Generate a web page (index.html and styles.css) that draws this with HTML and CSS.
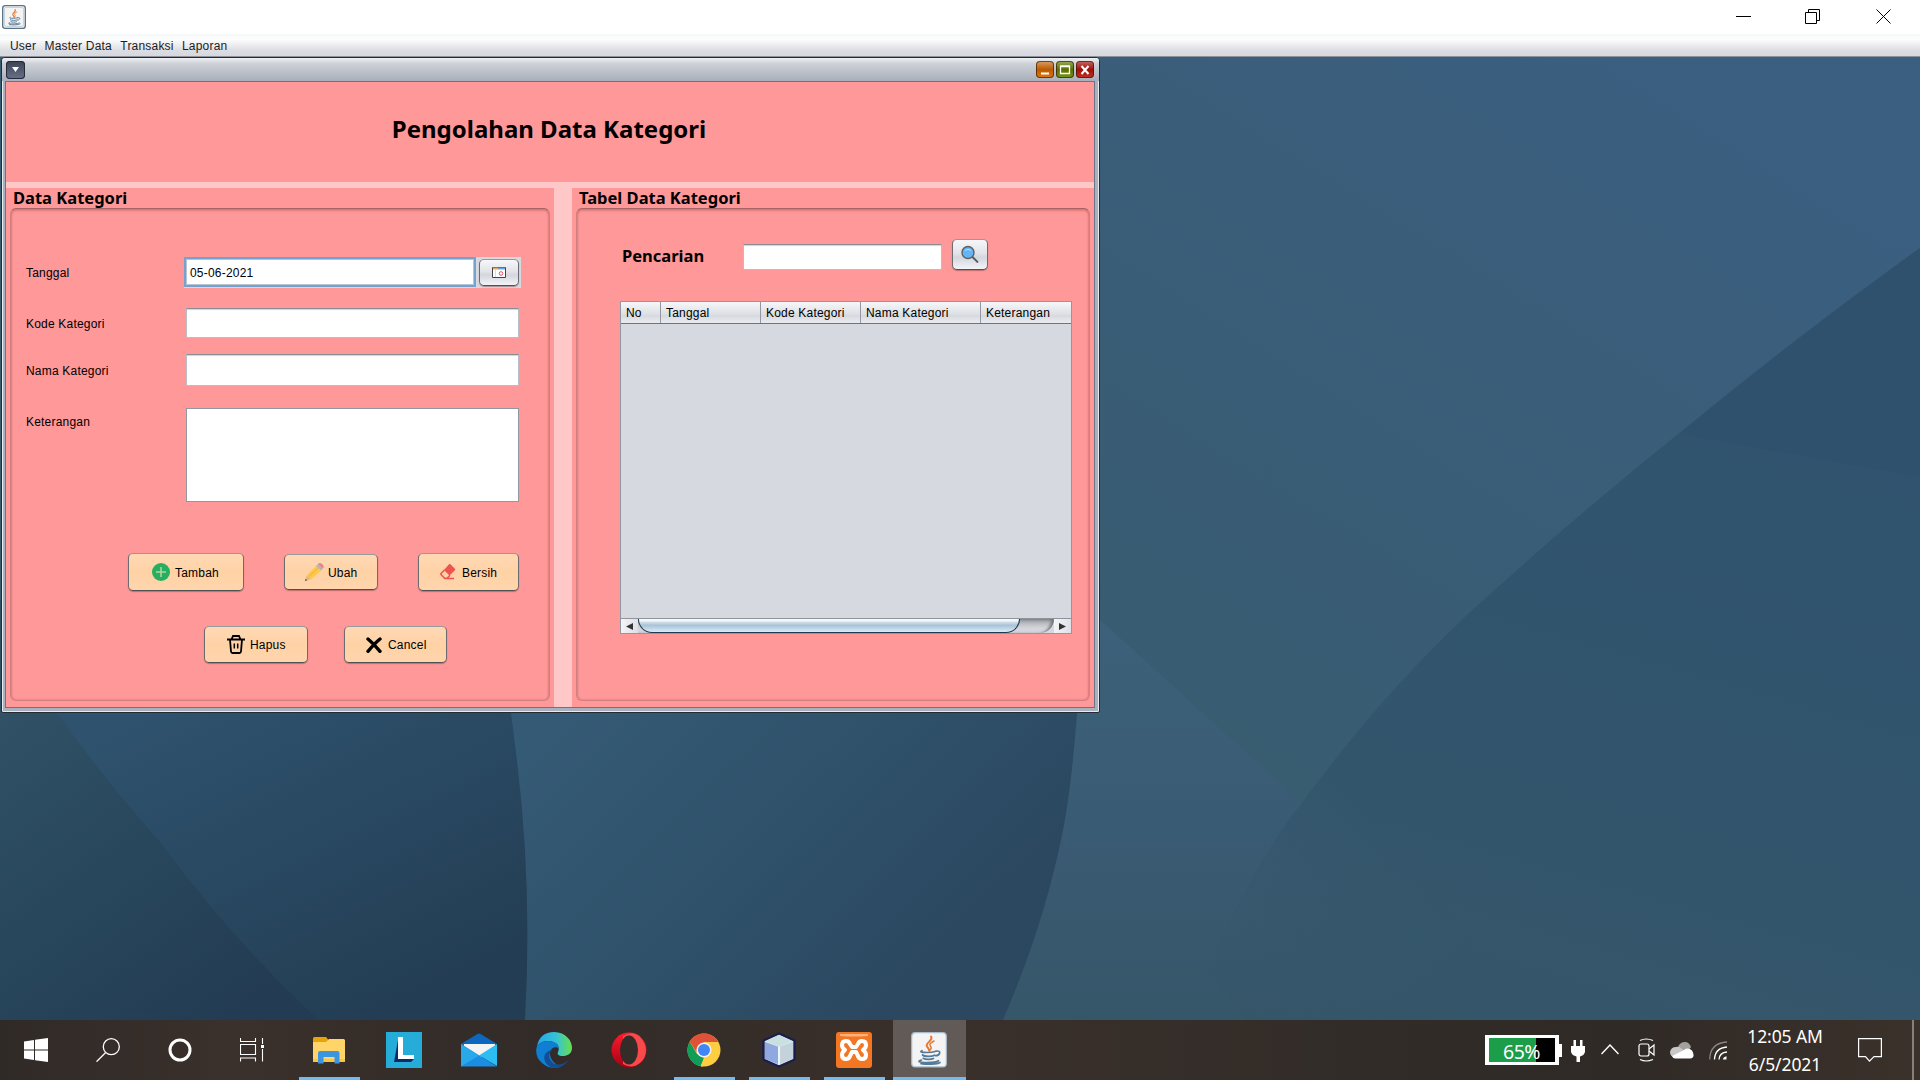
FILE: index.html
```html
<!DOCTYPE html>
<html lang="id">
<head>
<meta charset="utf-8">
<title>Pengolahan Data Kategori</title>
<link rel="stylesheet" href="styles.css">
</head>
<body>
<svg class="defs" aria-hidden="true">
  <symbol id="java" viewBox="0 0 36 36">
    <rect x=".7" y=".7" width="34.6" height="34.2" rx="3.5" fill="#f4f4f4" stroke="#a9bccb" stroke-width="1.2"/>
    <g fill="none" stroke="#e8762c" stroke-linecap="round"><path stroke-width="2" d="M20 4.500c3 4-6.500 6.500-4 10 1 1.500 2.200 2.400 2.300 4.200"/><path stroke-width="1.500" d="M23 9c-6 3-4 4.500-3 6.200.8 1.400-.3 2.200-1.500 3.200"/></g>
    <g fill="none" stroke="#557a98" stroke-width="1.700" stroke-linecap="round"><path d="M11 18.700c-5 2 8 2.500 14 .5M11.500 23c2 1.800 9.500 1.600 12 .2M12.300 26.300c2 1.500 8 1.400 10.200.2M25 19.200c6-1.200 4 4.300-.5 4.500M10.500 28c-10 3 13 3.500 17 .7M10 31.700c7 1 16 .5 19-1.300"/></g>
  </symbol>
</svg>

<header class="titlebar">
  <svg class="app-icon" viewBox="0 0 36 36"><rect x="1" y="1" width="34" height="34" rx="4" fill="#f4f4f4" stroke="#5c7385" stroke-width="2"/><use href="#java" x="3" y="3" width="30" height="30"/></svg>
  <svg class="win-buttons" width="155" height="15" viewBox="0 0 155 15" fill="none" stroke="#000">
    <path d="M0 7.500h15M69.500 3.500h11v11h-11zM72.500 3V.500h11v11H81M140.500.500l14 14M154.500.500l-14 14"/>
  </svg>
</header>
<nav class="menubar"><span>User</span><span>Master Data</span><span>Transaksi</span><span>Laporan</span></nav>

<main class="desktop">
  <svg class="wallpaper" viewBox="0 57 1920 963" preserveAspectRatio="none">
    <defs>
      <linearGradient id="sky" gradientUnits="userSpaceOnUse" x1="1700" y1="57" x2="1240" y2="780"><stop offset="0" stop-color="#3a5f80"/><stop offset=".45" stop-color="#3a5d79"/><stop offset="1" stop-color="#385c70"/></linearGradient>
      <linearGradient id="wedge" gradientUnits="userSpaceOnUse" x1="0" y1="620" x2="0" y2="1020"><stop offset="0" stop-color="#3d617a"/><stop offset=".5" stop-color="#3a5b74"/><stop offset="1" stop-color="#365669"/></linearGradient>
      <linearGradient id="dark" gradientUnits="userSpaceOnUse" x1="1800" y1="320" x2="1600" y2="1020"><stop offset="0" stop-color="#30526f"/><stop offset=".45" stop-color="#31546e"/><stop offset="1" stop-color="#35566a"/></linearGradient>
      <linearGradient id="fade" gradientUnits="userSpaceOnUse" x1="1190" y1="950" x2="1370" y2="810"><stop offset="0" stop-color="#fff" stop-opacity="0"/><stop offset="1" stop-color="#fff"/></linearGradient>
      <mask id="soft" maskUnits="userSpaceOnUse" x="1100" y="57" width="820" height="963"><rect x="1100" y="57" width="820" height="963" fill="url(#fade)"/></mask>
      <linearGradient id="petalA" gradientUnits="userSpaceOnUse" x1="0" y1="713" x2="220" y2="1020"><stop offset="0" stop-color="#305166"/><stop offset=".5" stop-color="#28475d"/><stop offset="1" stop-color="#233c53"/></linearGradient>
      <linearGradient id="petalB" gradientUnits="userSpaceOnUse" x1="180" y1="700" x2="340" y2="1030"><stop offset="0" stop-color="#2f526e"/><stop offset=".5" stop-color="#294861"/><stop offset="1" stop-color="#233e54"/></linearGradient>
      <linearGradient id="petalC" gradientUnits="userSpaceOnUse" x1="600" y1="680" x2="900" y2="990"><stop offset="0" stop-color="#355a75"/><stop offset=".5" stop-color="#30526b"/><stop offset="1" stop-color="#2b4860"/></linearGradient>
    </defs>
    <rect y="57" width="1920" height="963" fill="url(#sky)"/>
    <path fill="url(#wedge)" d="M1000 530L1100 620L1302 803L1560 1020H980z"/>
    <path mask="url(#soft)" fill="url(#dark)" d="M1920 248Q1797 336 1678 434Q1565 525 1467 615Q1377 700 1302 803Q1240 880 1190 1020H1920z"/>
    <path fill="#30506f" opacity=".4" d="M1680 434L1920 477V248Q1797 336 1680 434z"/>
    <path fill="url(#petalC)" d="M480 600H1084Q1076 770 1062 835Q1044 925 1003 1020H500z"/>
    <path fill="url(#petalB)" d="M0 600H494Q510 700 515 745Q533 880 525 1020H0z"/>
    <path fill="url(#petalA)" d="M0 600L57 713Q105 780 161 843Q232 940 319 1020H0z"/>
  </svg>

  <section class="frame">
    <div class="frame-title">
      <span class="frame-menu"><svg width="19" height="18"><path d="M6 6h7l-3.500 5z" fill="#fff"/></svg></span>
      <div class="frame-controls">
        <span class="ctl orange"><svg width="18" height="18"><path d="M5 12.500h8" stroke="#fff" stroke-width="2"/></svg></span>
        <span class="ctl green"><svg width="18" height="18"><path d="M4.500 5.500h9v7h-9zM4 5h10" stroke="#fff" stroke-width="1.300" fill="none"/></svg></span>
        <span class="ctl red"><svg width="18" height="18"><path d="M5.500 5l7 8M12.500 5l-7 8" stroke="#fff" stroke-width="2"/></svg></span>
      </div>
    </div>
    <div class="content">
      <h1>Pengolahan Data Kategori</h1>
      <div class="panels">
        <section class="panel">
          <h2>Data Kategori</h2>
          <div class="group form">
            <div class="row date-row"><label>Tanggal</label>
              <div class="date"><div class="field focused">05-06-2021</div>
                <span class="btn silver cal"><svg width="14" height="11"><path fill="#fff" stroke="#444" d="M.5.500h13v10H.5z"/><path stroke="#eda54b" stroke-width="2" d="M1 1.500h5"/><path stroke="#6ba4d8" stroke-width="2" d="M6 1.500h7"/><path stroke="#ddd" d="M3.500 3v7"/><circle cx="9" cy="6.500" r="1.800" fill="none" stroke="#e0525c"/></svg></span>
              </div>
            </div>
            <div class="row code-row"><label>Kode Kategori</label><div class="field"></div></div>
            <div class="row name-row"><label>Nama Kategori</label><div class="field"></div></div>
            <div class="row note-row"><label>Keterangan</label><div class="area"></div></div>
            <div class="actions first">
              <span class="btn peach tambah"><svg width="18" height="18"><circle cx="9" cy="9" r="9" fill="#27ae60"/><path d="M9 4v10M4 9h10" stroke="#b5d898" stroke-width="1.500"/></svg>Tambah</span>
              <span class="btn peach ubah"><svg width="19" height="18"><path fill="#eab37c" d="M0 18l2-6 4 4z"/><path fill="#444" d="M0 18l.7-2.200 1.500 1.500z"/><path fill="#ffc84d" d="M2 12L11 3l5 4.500-10 9z"/><path stroke="#f3ad3d" fill="none" d="M4 13.500L13 5"/><path fill="#aab8bf" d="M11 3l2-2 5 4.500-2 2z"/><path fill="#fb7587" d="M13 1c1.500-1.500 3-1 4.500.5s1.500 2.500.5 4z"/></svg>Ubah</span>
              <span class="btn peach bersih"><svg width="16" height="16"><path fill="#ef5350" d="M9 .3q.7-.6 1.400 0l4.500 4.500q.7.700 0 1.400L9.500 11.500 4 6z"/><path fill="none" stroke="#ef5350" stroke-width="1.500" d="M4.500 6L1.200 9.300q-.7.700 0 1.400L4.500 14.200H7l3-3M4.500 14.500h9.500"/></svg>Bersih</span>
            </div>
            <div class="actions second">
              <span class="btn peach hapus"><svg width="18" height="19" fill="none" stroke="#000"><path stroke-width="1.800" d="M0 4.500h18M4.500 4.500L6 1h6l1.500 3.500M3 4.500L4 16.500q.2 1.500 1.500 1.500h7q1.300 0 1.500-1.500L15 4.500"/><path stroke-width="1.500" d="M7.300 8.500v5M10.700 8.500v5"/></svg>Hapus</span>
              <span class="btn peach cancel"><svg width="16" height="16"><path d="M2 2q6 5 12 12.300M14 2Q9 6 2 14.300" stroke="#000" fill="none" stroke-width="3.400" stroke-linecap="round"/></svg>Cancel</span>
            </div>
          </div>
        </section>
        <section class="panel">
          <h2>Tabel Data Kategori</h2>
          <div class="group browse">
            <div class="search"><b>Pencarian</b><div class="field"></div>
              <span class="btn silver find"><svg width="18" height="18"><path d="M11 11.500l6 6" stroke="#555a60" stroke-width="1.800"/><circle cx="7" cy="7.500" r="6" fill="#64b5f6" stroke="#616161" stroke-width="1.400"/><path d="M4 5.500q3-2.500 6 0" stroke="#bbdefb" fill="none"/></svg></span>
            </div>
            <div class="table">
              <div class="thead"><span>No</span><span>Tanggal</span><span>Kode Kategori</span><span>Nama Kategori</span><span>Keterangan</span></div>
              <div class="tbody"></div>
              <div class="scroll">
                <i class="arrow"><svg width="7" height="7"><path d="M7 0v7L0 3.500z" fill="#333"/></svg></i>
                <i class="track"><i class="thumb"></i></i>
                <i class="arrow"><svg width="7" height="7"><path d="M0 0v7l7-3.500z" fill="#333"/></svg></i>
              </div>
            </div>
          </div>
        </section>
      </div>
    </div>
  </section>
</main>

<footer class="taskbar">
  <div class="apps">
    <span class="task"><svg width="24" height="24" fill="#fff"><path d="M0 3.500L10 2v9.500H0zM11 1.800L24 0v11.500H11zM0 12.500h10V22L0 20.500zM11 12.500h13V24L11 22.200z"/></svg></span>
    <span class="task"><svg width="24" height="24" fill="none" stroke="#fff" stroke-width="1.300"><circle cx="15.300" cy="8.700" r="8"/><path d="M9.700 14.500L.5 23.700"/></svg></span>
    <span class="task"><svg width="24" height="24" fill="none"><circle cx="12" cy="12" r="10" stroke="#fff" stroke-width="3"/></svg></span>
    <span class="task"><svg width="24" height="24" fill="none" stroke="#fff" stroke-width="1.100"><path d="M.5 0v3.500h15V0M.5 6.500h15v10H.5zM.5 23.500v-3.500h15v3.500M22.500 0v6M22.500 11v12.500"/><path fill="#fff" stroke="none" d="M21 7h3v3h-3z"/></svg></span>
    <span class="task open"><svg width="32" height="27"><path fill="#e5a50a" d="M0 1.500Q0 0 1.500 0H13l2.500 3-2 3H0z"/><path fill="#ffd56a" d="M0 5h13l3-3h14.500Q32 2 32 3.500V25H0z"/><path fill="#f7c648" d="M0 22h32v3H0z"/><path fill="#3b95df" d="M5 26.500V16q0-2 2-2h17.500q2 0 2 2v10.500h-5V20h-11v6.500z"/></svg></span>
    <span class="task"><svg width="36" height="36"><path fill="#25acd8" d="M0 0h36v36H0z"/><path fill="#0d2c66" d="M12 8L8 30h17l3-3-15-1z"/><path fill="#fff" d="M12 5h5v18h11v4H12z"/></svg></span>
    <span class="task"><svg width="36" height="34"><path fill="#0b68bd" d="M0 11L16 1.200q2-1.500 4 0L36 11v5H0z"/><path fill="#f4f4f4" d="M3 11h31v8L18 25 3 16z"/><path fill="#2cbdf2" d="M18 22.500L36 11v22z"/><path fill="#1b8ee4" d="M0 11l36 22.500H0z"/><path fill="#29a8ea" d="M0 11l18 11.500L0 33.500z"/></svg></span>
    <span class="task"><svg width="36" height="36"><defs><linearGradient id="e1"><stop stop-color="#24a8e8"/><stop offset=".55" stop-color="#35c2d8"/><stop offset="1" stop-color="#67e04b"/></linearGradient></defs><path fill="url(#e1)" d="M1 14Q4 0 18 0c12 0 18 9 18 16 0 6-5 8-9 8-5 0-6-2-5-4 3-6-2-11-10-11Q5 9 1 14z"/><path fill="#0f7fd3" d="M1 14q4-5 11-5c7 0 11 3 11 8-3-4-10-1-9 6 1 6 6 9 10 12Q14 38 6 31-2 24 1 14z"/><path fill="#124d96" d="M16 18q-6 6 0 12c5 5 13 2 17-3-5 9-15 11-20 7-8-6-5-15 3-16z"/></svg></span>
    <span class="task"><svg width="36" height="36"><defs><linearGradient id="o1" x2="0" y2="1"><stop stop-color="#ff1b2d"/><stop offset="1" stop-color="#a70014"/></linearGradient></defs><ellipse cx="18" cy="18" rx="17.500" ry="17.500" fill="url(#o1)"/><path fill="#f9494b" d="M12 4Q22-2 29 5c8 8 8 19 0 26-6 5-12 4-17 1z"/><ellipse cx="18" cy="18" rx="9" ry="14.500" fill="#332c29"/></svg></span>
    <span class="task open"><svg width="34" height="34"><circle cx="17" cy="17" r="16.500" fill="#ffcd40"/><path fill="#db4437" d="M2.700 8.700A16.500 16.500 0 0 1 31.300 9H17l-7.500 10z" opacity=".9"/><path fill="#0f9d58" d="M2.700 8.700L10 21l7 4-3.500 8.300A16.500 16.500 0 0 1 2.700 8.700z"/><path fill="#ffcd40" d="M17 25l6-4-7 12.500h-2z"/><circle cx="17" cy="17" r="7.600" fill="#f1f1f1"/><circle cx="17" cy="17" r="6" fill="#4285f4"/></svg></span>
    <span class="task open"><svg width="34" height="36"><path fill="#d8e8ef" stroke="#1b1d4d" stroke-width="2.400" stroke-linejoin="round" d="M17 1.500L32.500 8.500v19L17 34.500 1.500 27.500v-19z"/><path fill="#c8e0de" d="M17 3l13 6-13 5.500L4 9z"/><path fill="#8fa8df" d="M3 10l14 5v17.500L3 27z"/><path fill="#c4d2db" d="M31 10l-14 5v17.500L31 27z"/><path d="M17 14.500v18" stroke="#eef5fa" stroke-width="2"/></svg></span>
    <span class="task open"><svg width="36" height="36"><rect width="36" height="36" rx="3" fill="#f37623"/><path fill="#fbb281" d="M4 2h28v2q-14 1-28 0z"/><path d="M14 12q-1-3-4-3-4 0-4 4 0 3 3 5-3 2-3 5 0 4 4 4 3 0 4-3l2-4h4l2 4q1 3 4 3 4 0 4-4 0-3-3-5 3-2 3-5 0-4-4-4-3 0-4 3l-2 3h-4z" fill="none" stroke="#fff" stroke-width="4" stroke-linejoin="round"/></svg></span>
    <span class="task open active"><svg width="36" height="36"><use href="#java"/></svg></span>
  </div>
  <div class="tray">
    <div class="battery"><span>65%</span></div>
    <svg class="plug" width="14" height="22" fill="#fff"><path d="M2.500 0h2.500v6h4V0h2.500v6H14v6q-1 3.500-5 4.500V22H5.500v-5.500Q1 15.500 0 12V6h2.500z"/></svg>
    <svg class="chev" width="18" height="11"><path d="M.5 10L9 1l8.500 9" fill="none" stroke="#fff" stroke-width="1.400"/></svg>
    <svg class="cam" width="17" height="24" fill="none" stroke="#fff" stroke-width="1.200"><rect x="1" y="6" width="10" height="12" rx="2"/><path d="M11 11l5-4v10l-5-4M2 2.500q6-3 13 0M2 21.500q6 3 13 0"/></svg>
    <svg class="cloud" width="24" height="17"><path fill="#a3a09e" d="M8 5q2-5 7-5 4 0 6 5l-5 7H8z"/><path fill="#c9c7c6" d="M5 15q-5 0-5-5 1-5 6-5 3-1 6 2l8 5z"/><path fill="#fff" d="M2 14l12-6q4-3 8 .5 4 7-2 8H5q-2 0-3-2.500z"/></svg>
    <svg class="wifi" width="19" height="20" fill="none" stroke="#fff" stroke-width="1.300"><path stroke="#8a8583" d="M.7 18.500Q1 2 18 1"/><path d="M5.500 18.500Q6 7 18 6M10 18.500Q10.500 11.500 18 11"/><path d="M14 18.500q0-2.500 3.500-3.200v3.200z" fill="#fff" stroke="none"/></svg>
    <div class="clock"><span>12:05 AM</span><span>6/5/2021</span></div>
    <svg class="note" width="24" height="25" fill="none" stroke="#fff" stroke-width="1.200"><path d="M.6.600h22.800v18H16l-4.500 4.500L7.500 18.600H.6z"/></svg>
    <i class="peek"></i>
  </div>
</footer>
</body>
</html>
```
FILE: styles.css
```css
* { box-sizing: border-box; }
body {
  margin: 0; width: 1920px; height: 1080px; overflow: hidden;
  display: flex; flex-direction: column;
  font: 12px/14px "Liberation Sans", Arial, sans-serif; color: #000;
}
svg { display: block; flex: none; }
i { display: block; }
.defs { width: 0; height: 0; position: absolute; }

.titlebar {
  height: 34px; flex: none; background: #fff;
  display: flex; justify-content: space-between; padding: 5px 29px 0 2px;
}
.app-icon { width: 24px; height: 24px; }
.win-buttons { margin-top: 4px; }
.menubar {
  height: 23px; flex: none; padding: 5px 0 0 10px; color: #1d1d22; letter-spacing: .2px;
  display: flex; gap: 8.300px;
  background: linear-gradient(#f6f9f9, #fdfdfe 25%, #dcdde3 75%, #d6d8de);
  border-bottom: 1px solid #8d919b;
}

.desktop { height: 963px; flex: none; position: relative; }
.wallpaper { width: 1920px; height: 963px; }

/* internal window */
.frame {
  position: absolute; left: 1px; top: 0; width: 1099px; height: 656px;
  display: flex; flex-direction: column; padding: 0 5px 4px 4px;
  background: #a9b0be; border: 1px solid #262b33; border-radius: 4px 4px 2px 2px;
  box-shadow: inset 0 0 0 1px #e8eaee;
}
.frame-title {
  height: 23px; flex: none; margin: 0 -5px 0 -4px; padding: 3px 5px 0 4px;
  display: flex; justify-content: space-between;
  background: linear-gradient(#eff1f3, #cdd1d8 25%, #a8afba); border-radius: 3px 3px 0 0;
}
.frame-menu { width: 19px; height: 18px; border-radius: 4px; background: linear-gradient(#3c4353, #67718a); box-shadow: inset 0 0 0 1px #252a38; }
.frame-controls { display: flex; gap: 2px; }
.ctl { width: 18px; height: 17px; border-radius: 4px; box-shadow: inset 0 0 0 1px rgba(50, 20, 0, .65); }
.orange { background: linear-gradient(#d9a16c, #bd5a00 50%, #e0780f); }
.green { background: linear-gradient(#9ead55, #587000 50%, #7a941a); }
.red { background: linear-gradient(#c96a65, #9d1008 50%, #c83027); }
.content {
  flex: 1; margin: 0 -1px; display: flex; flex-direction: column; gap: 6px;
  background: #ffc8c8; border: 1px solid #6b7485;
}
h1, h2 { margin: 0; font-family: "Noto Sans", sans-serif; font-weight: bold; }
h1 {
  height: 100px; flex: none; background: #ff9898; text-align: center; padding-right: 2px;
  font-size: 24px; line-height: 94px;
}
.panels { flex: 1; display: grid; grid-template-columns: 548px 522px; gap: 18px; }
.panel { background: #ff9898; padding: 0 4px 6px; display: flex; flex-direction: column; }
h2 { font-size: 16.500px; height: 20px; line-height: 20px; padding-left: 3px; }
.group {
  flex: 1; border-radius: 6px; border: 1px solid #d08080; border-top-color: #a86464;
  box-shadow: inset 0 2px 2px rgba(120, 40, 40, .2), inset 1px 0 2px rgba(120, 40, 40, .2), inset -1px 0 2px rgba(120, 40, 40, .2);
}

/* form */
.form { display: flex; flex-direction: column; padding: 48px 30px 0 15px; letter-spacing: .2px; }
.row { display: flex; align-items: center; }
.row label { width: 160px; padding-top: 1px; }
.field { height: 100%; flex: 1; background: #fff; border: 1px solid #b9bec4; border-top-color: #8b8f94; box-shadow: inset 0 2px 1px -1px #d0d2d6; }
.date-row { height: 31px; margin-right: -2px; }
.date-row label { width: 158px; }
.date { flex: 1; height: 31px; display: flex; align-items: center; gap: 3px; background: #d6d9df; padding: 0 2px 0 0; }
.focused { height: 30px; border: 2px solid #73a4d1; line-height: 28px; padding-left: 4px; box-shadow: inset 0 0 0 1px #b9c4d0; align-self: flex-start; flex: 0 0 292px; }
.code-row { height: 30px; margin-top: 20px; }
.name-row { height: 32px; margin-top: 16px; }
.note-row { height: 94px; margin-top: 22px; align-items: flex-start; }
.note-row label { padding-top: 7px; }
.area { height: 94px; flex: 1; background: #fff; border: 1px solid #9297a1; }

.btn { display: flex; align-items: center; border: 1px solid #6b6b70; border-top-color: #99999c; border-radius: 5px; border-bottom-color: #4f5052; box-shadow: 0 1px 1px rgba(110, 60, 60, .45); }
.peach { background: linear-gradient(#ffd9b4, #ffd2a6 50%, #ffd5ac); padding-top: 1px; }
.peach svg { margin-top: -1px; }
.silver { background: linear-gradient(#f6f7f9, #e2e4e9 45%, #d3d6dd 60%, #f2f4f8); }
.cal { width: 40px; height: 27px; padding-left: 12px; padding-bottom: 1px; }
.actions { display: flex; align-items: center; }
.first { height: 38px; margin: 51px -10px 0 102px; gap: 40px; }
.second { height: 37px; margin: 35px 0 0 178px; gap: 36px; }
.tambah { width: 116px; height: 38px; padding-left: 23px; gap: 5px; }
.ubah { width: 94px; height: 36px; padding-left: 20px; gap: 4px; }
.bersih { width: 101px; height: 38px; padding-left: 21px; gap: 6px; }
.hapus { width: 104px; height: 37px; padding-left: 22px; gap: 5px; }
.cancel { width: 103px; height: 37px; padding-left: 21px; gap: 6px; }

/* table side */
.browse { padding: 30px 17px 0 43px; }
.search { display: flex; height: 32px; align-items: flex-start; padding-left: 2px; }
.search b { width: 121px; padding-top: 7px; font: bold 16.500px/20px "Noto Sans", sans-serif; }
.search .field { flex: 0 0 199px; height: 26px; margin-top: 5px; }
.find { width: 36px; height: 31px; margin-left: 10px; padding: 0 0 2px 8px; }
.table { width: 452px; height: 333px; margin-top: 30px; border: 1px solid #9297a1; display: flex; flex-direction: column; background: #d6d9e0; }
.thead { height: 22px; flex: none; display: grid; grid-template-columns: 40px 100px 100px 120px 90px; background: linear-gradient(#f6f7f9, #dcdfe4 60%, #d6d8dd 62%, #eaecf1); border-bottom: 1px solid #6b7485; }
.thead span { padding: 4px 0 0 5px; border-right: 1px solid #9297a1; letter-spacing: .2px; }
.thead span:last-child { border-right: 0; }
.tbody { flex: 1; }
.scroll { height: 15px; display: flex; border-top: 1px solid #8f939b; background: #d6d9e0; }
.arrow { width: 17px; display: grid; place-items: center; background: linear-gradient(100deg, #f6f6f8, #dddfe5); }
.track { flex: 1; background: linear-gradient(#a4a5aa, #d5d6dc 65%); border-radius: 0 0 14px 0; box-shadow: inset -3px 1px 3px #77787c; }
.thumb { width: 382px; height: 14px; border: 1px solid #1f3a50; border-top: 0; border-radius: 0 0 14px 14px; background: linear-gradient(#f7fafc 10%, #c5d7e5 30%, #a9c3d9 50%, #d9edf8); }

/* taskbar */
.taskbar { height: 60px; flex: none; display: flex; justify-content: space-between; background: linear-gradient(90deg, #302a26, #3a302c 12%, #322b27 28%, #3a302b 50%, #322c28 70%, #302a26 85%, #3b312b); }
.apps { display: flex; }
.task { width: 72px; height: 60px; display: grid; place-items: center; position: relative; }
.task:nth-child(n+5) { width: 75px; }
.task:nth-child(5) { margin-left: 3px; }
.open::after { content: ""; position: absolute; bottom: 0; left: 8px; right: 6px; height: 3px; background: #76b9ed; }
.task.active { width: 73px; background: #615a56; margin-left: 2px; padding-right: 2px; }
.active::after { left: 0; right: 0; }
.tray { display: flex; align-items: center; color: #fff; }
.battery {
  width: 74px; height: 30px; border: 4px solid #fff; border-top-width: 3px; border-bottom-width: 3px;
  background: linear-gradient(90deg, #1b9d49 71%, #000 71%); position: relative;
  font: 19.500px/27px "Noto Sans", sans-serif; letter-spacing: -.5px; padding-left: 14px;
}
.battery::after { content: ""; position: absolute; right: -7px; top: 6px; width: 3px; height: 13px; background: #fff; }
.plug { margin: 2px 0 0 12px; }
.chev { margin: -2px 0 0 16px; }
.cam { margin-left: 19px; }
.cloud { margin-left: 15px; }
.wifi { margin: 2px 0 0 15px; }
.clock { width: 84px; margin-left: 15px; display: flex; flex-direction: column; align-items: center; font: 17.500px/28px "Noto Sans", sans-serif; letter-spacing: -.1px; }
.note { margin-left: 31px; }
.peek { width: 2px; height: 60px; background: #85807b; margin: 0 6px 0 30px; }
```
